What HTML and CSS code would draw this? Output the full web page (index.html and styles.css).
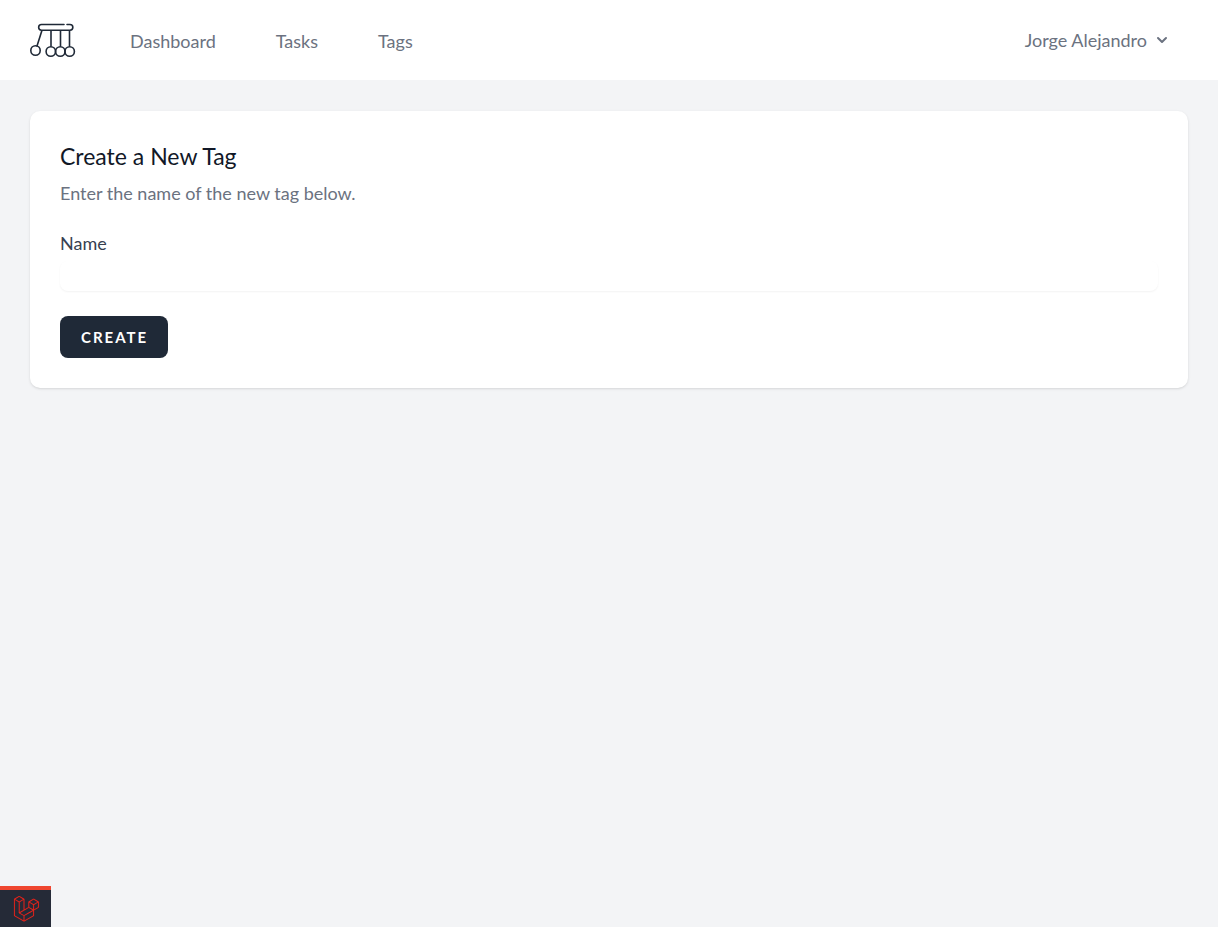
FILE: index.html
```html
<!DOCTYPE html>
<html lang="en">
<head>
<meta charset="utf-8">
<meta name="viewport" content="width=device-width, initial-scale=1">
<title>Create a New Tag</title>
<link rel="stylesheet" href="styles.css">
</head>
<body>
<header class="navbar">
  <a class="brand" href="#" aria-label="Home">
    <svg class="brand-icon" viewBox="0 0 46 46" fill="none" stroke="#1f2937" stroke-width="1.6" stroke-linecap="round">
      <path d="M34 7.5H11.5a2.8 2.8 0 0 0 0 5.7H40a2.8 2.8 0 0 0 0-5.7H37M12 13.3L7 29M21 13.3V29M30.5 13.3V29M39.5 13.3V29"/>
      <circle cx="5.5" cy="33.5" r="4.7"/>
      <circle cx="20.8" cy="34.5" r="4.7"/>
      <circle cx="30.3" cy="34.5" r="4.7"/>
      <circle cx="39.7" cy="34.5" r="4.7"/>
    </svg>
  </a>
  <nav class="nav-links">
    <a href="#">Dashboard</a>
    <a href="#">Tasks</a>
    <a href="#">Tags</a>
  </nav>
  <button class="user-menu" type="button">
    Jorge Alejandro
    <svg class="chevron" viewBox="0 0 20 20" fill="currentColor"><path fill-rule="evenodd" d="M5.293 7.293a1 1 0 011.414 0L10 10.586l3.293-3.293a1 1 0 111.414 1.414l-4 4a1 1 0 01-1.414 0l-4-4a1 1 0 010-1.414z"/></svg>
  </button>
</header>
<main class="content">
  <section class="card">
    <h1 class="card-title">Create a New Tag</h1>
    <p class="card-text">Enter the name of the new tag below.</p>
    <form class="tag-form">
      <label class="label" for="name">Name</label>
      <input class="input" id="name" name="name" type="text">
      <button class="submit" type="submit">CREATE</button>
    </form>
  </section>
</main>
<button class="debug-toggle" type="button" aria-label="Open debug bar">
  <svg class="debug-icon" viewBox="0 0 50 52" fill="#f4251b" stroke="#f4251b" stroke-width="0.3"><path d="M49.626 11.564a.809.809 0 0 1 .028.209v10.972a.8.8 0 0 1-.402.694l-9.209 5.302V39.25c0 .286-.152.55-.4.694L20.42 51.01c-.044.025-.092.041-.14.058-.018.006-.035.017-.054.022a.805.805 0 0 1-.41 0c-.022-.006-.042-.018-.063-.026-.044-.016-.09-.03-.132-.054L.402 39.944A.801.801 0 0 1 0 39.25V6.334c0-.072.01-.142.028-.21.006-.023.02-.044.028-.067.015-.042.029-.085.051-.124.015-.026.037-.047.055-.071.023-.032.044-.065.071-.093.023-.023.053-.04.079-.06.029-.024.055-.05.088-.069h.001l9.61-5.533a.802.802 0 0 1 .8 0l9.61 5.533h.002c.032.02.059.045.088.068.026.02.055.038.078.06.028.029.048.062.072.094.017.024.04.045.054.071.023.04.036.082.052.124.008.023.022.044.028.068a.809.809 0 0 1 .028.209v20.559l8.008-4.611v-10.51c0-.07.01-.141.028-.208.007-.024.02-.045.028-.068.016-.042.03-.085.052-.124.015-.026.037-.047.054-.071.024-.032.044-.065.072-.093.023-.023.052-.04.078-.06.03-.024.056-.05.088-.069h.001l9.611-5.533a.801.801 0 0 1 .8 0l9.61 5.533c.034.02.06.045.09.068.025.02.054.038.077.06.028.029.048.062.072.094.018.024.04.045.054.071.023.039.036.082.052.124.009.023.022.044.028.068zm-1.574 10.718v-9.124l-3.363 1.936-4.646 2.675v9.124l8.01-4.611zm-9.61 16.505v-9.13l-4.57 2.61-13.05 7.448v9.216l17.62-10.144zM1.602 7.719v31.068L19.22 48.93v-9.214l-9.204-5.209-.003-.002-.004-.002c-.031-.018-.057-.044-.086-.066-.025-.02-.054-.036-.076-.058l-.002-.003c-.026-.025-.044-.056-.066-.084-.02-.027-.044-.05-.06-.078l-.001-.003c-.018-.03-.029-.066-.042-.1-.013-.03-.03-.058-.038-.09v-.001c-.01-.038-.012-.078-.016-.117-.004-.03-.012-.06-.012-.09v-.002-21.481L4.965 9.654 1.602 7.72zm8.81-5.994L2.405 6.334l8.005 4.609 8.006-4.61-8.006-4.608zm4.164 28.764l4.645-2.674V7.719l-3.363 1.936-4.646 2.675v20.096l3.364-1.937zM39.243 7.164l-8.006 4.609 8.006 4.609 8.005-4.61-8.005-4.608zm-.801 10.605l-4.646-2.675-3.363-1.936v9.124l4.645 2.674 3.364 1.937v-9.124zM20.02 38.33l11.743-6.704 5.87-3.35-8-4.606-9.211 5.303-8.395 4.833 7.993 4.524z"/></svg>
</button>
</body>
</html>
```
FILE: styles.css
```css
* {
  box-sizing: border-box;
}

body {
  margin: 0;
  min-height: 100vh;
  background: #f3f4f6;
  color: #111827;
  font-family: Lato, "Noto Sans", sans-serif;
  font-size: 18px;
  line-height: 25px;
}

button,
input {
  font: inherit;
}

.navbar {
  display: flex;
  align-items: center;
  min-height: 80px;
  padding: 0 46px 0 30px;
  background: #fff;
}

.brand,
.brand-icon {
  display: block;
  width: 46px;
  height: 46px;
}

.nav-links {
  display: flex;
  gap: 60px;
  margin-left: 54px;
  padding-top: 3px;
}

.nav-links a {
  color: #6b7280;
  text-decoration: none;
}

.user-menu {
  display: flex;
  align-items: center;
  gap: 5px;
  margin-left: auto;
  padding: 0;
  border: 0;
  background: none;
  color: #6b7280;
}

.chevron {
  width: 20px;
  height: 20px;
}

.content {
  padding: 31px 30px;
}

.card {
  padding: 30px;
  border-radius: 10px;
  background: #fff;
  box-shadow: 0 1px 3px rgba(0, 0, 0, 0.1), 0 1px 2px -1px rgba(0, 0, 0, 0.1);
}

.card-title {
  margin: 0;
  font-size: 23px;
  font-weight: 400;
  line-height: 30px;
}

.card-text {
  margin: 10px 0 0;
  color: #6b7280;
}

.tag-form {
  display: flex;
  flex-direction: column;
  align-items: flex-start;
  margin-top: 25px;
}

.label {
  color: #374151;
}

.input {
  width: 100%;
  height: 30px;
  margin-top: 5px;
  padding: 0 10px;
  border: 0;
  border-radius: 8px;
  background: #fff;
  box-shadow: 0 1px 2px rgba(0, 0, 0, 0.05);
}

.submit {
  margin-top: 25px;
  padding: 11px 20px 11px 21px;
  border: 0;
  border-radius: 8px;
  background: #1f2937;
  color: #fff;
  font-size: 15px;
  font-weight: 700;
  line-height: 20px;
  letter-spacing: 2px;
}

.debug-toggle {
  position: fixed;
  bottom: 0;
  left: 0;
  display: flex;
  padding: 6px 11px 5px 13px;
  border: 0;
  border-top: 4px solid #ef4630;
  background: #252a37;
}

.debug-icon {
  width: 27px;
  height: 26px;
}
```
